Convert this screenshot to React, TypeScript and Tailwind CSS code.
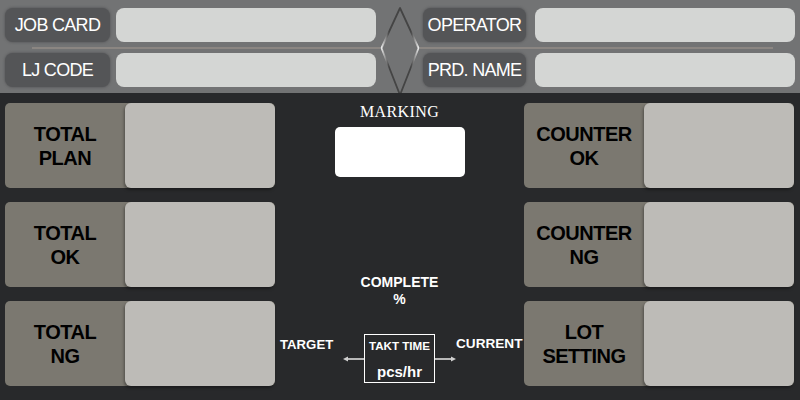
import React from "react";

const sans = { fontFamily: '"Liberation Sans", Arial, sans-serif' };

function HeaderRow({ label, labelW, gap }: { label: string; labelW: string; gap: string }) {
  return (
    <div className={`flex ${gap}`}>
      <div
        className={`${labelW} h-[34px] rounded-[8px] bg-[#545557] shadow-[0_0_3px_#4c4d4f] flex items-center justify-center text-white text-[18px] tracking-[-0.7px] whitespace-nowrap`}
      >
        {label}
      </div>
      <div className="w-[260px] h-[34px] rounded-[8px] bg-[#d4d6d4]" />
    </div>
  );
}

function Card({ l1, l2 }: { l1: string; l2: string }) {
  return (
    <div className="flex h-[85px] w-[270px] rounded-[5px] bg-[#7b7870]">
      <div className="w-[120px] flex flex-col items-center justify-center text-black font-bold text-[20px] leading-[24px] tracking-[-0.5px]">
        <span>{l1}</span>
        <span>{l2}</span>
      </div>
      <div className="w-[150px] h-full rounded-[6px] bg-[#bdbbb7] shadow-[-1px_2px_3px_rgba(0,0,0,0.35)]" />
    </div>
  );
}

function Arrow({ dir }: { dir: "left" | "right" }) {
  return (
    <svg width="21" height="8" viewBox="0 0 21 8" className="mt-[21px]">
      {dir === "left" ? (
        <>
          <line x1="3" y1="4" x2="21" y2="4" stroke="#b8b8b8" strokeWidth="2" />
          <polygon points="0,4 5,1.5 5,6.5" fill="#d0d0d0" />
        </>
      ) : (
        <>
          <line x1="0" y1="4" x2="18" y2="4" stroke="#b8b8b8" strokeWidth="2" />
          <polygon points="21,4 16,1.5 16,6.5" fill="#d0d0d0" />
        </>
      )}
    </svg>
  );
}

export default function App() {
  return (
    <div className="w-[800px] h-[400px] overflow-hidden bg-[#28292b] flex flex-col" style={sans}>
      {/* Header */}
      <div className="h-[93px] bg-[#727374] flex">
        <div className="ml-[5px] w-[375px] pt-[8px] flex flex-col">
          <HeaderRow label="JOB CARD" labelW="w-[105px]" gap="gap-[6px]" />
          <div className="ml-[27px] mt-[5px] mb-[4px] h-[2px] bg-[#8b8682]" />
          <HeaderRow label="LJ CODE" labelW="w-[105px]" gap="gap-[6px]" />
        </div>
        <svg width="40" height="93" viewBox="0 0 40 93">
          <defs>
            <linearGradient id="dg" x1="0" y1="0" x2="1" y2="0">
              <stop offset="0" stopColor="#e8e8e8" />
              <stop offset="0.2" stopColor="#444" />
              <stop offset="0.8" stopColor="#444" />
              <stop offset="1" stopColor="#e8e8e8" />
            </linearGradient>
          </defs>
          <polygon
            points="20,8 1.5,48 20,95 38.5,48"
            fill="none"
            stroke="url(#dg)"
            strokeWidth="1.8"
            strokeLinejoin="round"
          />
        </svg>
        <div className="w-[375px] pt-[8px] flex flex-col">
          <div className="ml-[3px]">
            <HeaderRow label="OPERATOR" labelW="w-[103px]" gap="gap-[9px]" />
          </div>
          <div className="mr-[22px] mt-[5px] mb-[4px] h-[2px] bg-[#8b8682]" />
          <div className="ml-[3px]">
            <HeaderRow label="PRD. NAME" labelW="w-[103px]" gap="gap-[9px]" />
          </div>
        </div>
      </div>

      {/* Body */}
      <div className="flex pl-[5px] pt-[10px]">
        <div className="flex flex-col gap-[14px]">
          <Card l1="TOTAL" l2="PLAN" />
          <Card l1="TOTAL" l2="OK" />
          <Card l1="TOTAL" l2="NG" />
        </div>

        <div className="w-[249px] flex flex-col items-center text-white">
          <div
            className="mt-[-1px] text-[16px] leading-[20px] tracking-[0.4px]"
            style={{ fontFamily: '"Liberation Serif", "Times New Roman", serif' }}
          >
            MARKING
          </div>
          <div className="mt-[5px] w-[130px] h-[50px] rounded-[5px] bg-white" />
          <div className="mt-[97px] flex flex-col items-center font-bold text-[14px] leading-[17px]">
            <span>COMPLETE</span>
            <span>%</span>
          </div>
          <div className="self-stretch pl-[5px] mt-[26px] flex items-start">
            <span className="w-[54px] mt-[3px] font-bold text-[13.2px] leading-[16px] whitespace-nowrap">TARGET</span>
            <div className="ml-[9px]">
              <Arrow dir="left" />
            </div>
            <div className="w-[71px] h-[49px] border border-white flex flex-col items-center font-bold">
              <span className="mt-[4px] text-[11.6px] leading-[14px] whitespace-nowrap">TAKT TIME</span>
              <span className="mt-[10px] text-[15px] leading-[18px]">pcs/hr</span>
            </div>
            <Arrow dir="right" />
            <span className="mt-[2px] font-bold text-[13.6px] leading-[16px] whitespace-nowrap">CURRENT</span>
          </div>
        </div>

        <div className="flex flex-col gap-[14px]">
          <Card l1="COUNTER" l2="OK" />
          <Card l1="COUNTER" l2="NG" />
          <Card l1="LOT" l2="SETTING" />
        </div>
      </div>
    </div>
  );
}
